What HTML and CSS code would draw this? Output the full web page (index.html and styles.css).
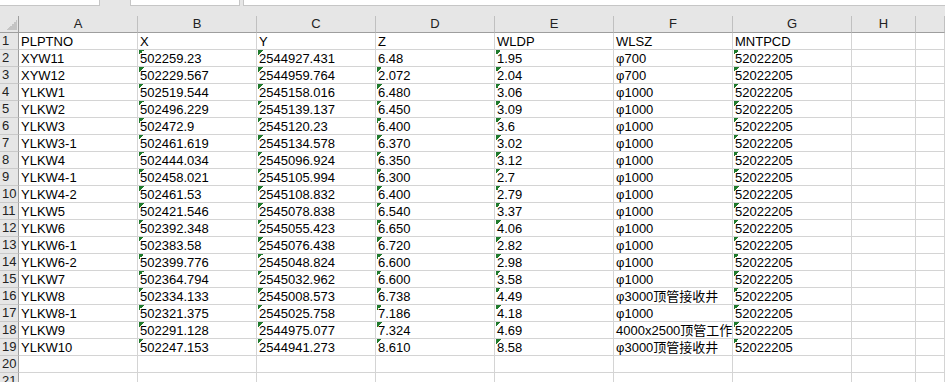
FILE: index.html
```html
<!DOCTYPE html>
<html lang="zh-CN">
<head>
    <meta charset="UTF-8">
    <title>PLPTNO - Sheet1</title>
    <link rel="stylesheet" href="styles.css">
</head>
<body>
    <div class="topbar">
        <div class="box box-name"></div>
        <div class="box box-mid"></div>
        <div class="box box-formula"></div>
    </div>

    <div class="sheet">
        <div class="row head">
            <div class="corner"></div>
            <div class="colhead">A</div>
            <div class="colhead">B</div>
            <div class="colhead">C</div>
            <div class="colhead">D</div>
            <div class="colhead">E</div>
            <div class="colhead">F</div>
            <div class="colhead">G</div>
            <div class="colhead">H</div>
            <div class="colhead"></div>
        </div>

        <div class="row">
            <div class="rownum">1</div>
            <div class="cell">PLPTNO</div><div class="cell">X</div><div class="cell">Y</div><div class="cell">Z</div>
            <div class="cell">WLDP</div><div class="cell">WLSZ</div><div class="cell">MNTPCD</div><div class="cell"></div><div class="cell"></div>
        </div>
        <div class="row">
            <div class="rownum">2</div>
            <div class="cell">XYW11</div><div class="cell flag">502259.23</div><div class="cell flag">2544927.431</div><div class="cell">6.48</div>
            <div class="cell flag">1.95</div><div class="cell">φ700</div><div class="cell flag">52022205</div><div class="cell"></div><div class="cell"></div>
        </div>
        <div class="row">
            <div class="rownum">3</div>
            <div class="cell">XYW12</div><div class="cell flag">502229.567</div><div class="cell flag">2544959.764</div><div class="cell flag">2.072</div>
            <div class="cell flag">2.04</div><div class="cell">φ700</div><div class="cell flag">52022205</div><div class="cell"></div><div class="cell"></div>
        </div>
        <div class="row">
            <div class="rownum">4</div>
            <div class="cell">YLKW1</div><div class="cell flag">502519.544</div><div class="cell flag">2545158.016</div><div class="cell flag">6.480</div>
            <div class="cell flag">3.06</div><div class="cell">φ1000</div><div class="cell flag">52022205</div><div class="cell"></div><div class="cell"></div>
        </div>
        <div class="row">
            <div class="rownum">5</div>
            <div class="cell">YLKW2</div><div class="cell flag">502496.229</div><div class="cell flag">2545139.137</div><div class="cell flag">6.450</div>
            <div class="cell flag">3.09</div><div class="cell">φ1000</div><div class="cell flag">52022205</div><div class="cell"></div><div class="cell"></div>
        </div>
        <div class="row">
            <div class="rownum">6</div>
            <div class="cell">YLKW3</div><div class="cell flag">502472.9</div><div class="cell flag">2545120.23</div><div class="cell flag">6.400</div>
            <div class="cell flag">3.6</div><div class="cell">φ1000</div><div class="cell flag">52022205</div><div class="cell"></div><div class="cell"></div>
        </div>
        <div class="row">
            <div class="rownum">7</div>
            <div class="cell">YLKW3-1</div><div class="cell flag">502461.619</div><div class="cell flag">2545134.578</div><div class="cell flag">6.370</div>
            <div class="cell flag">3.02</div><div class="cell">φ1000</div><div class="cell flag">52022205</div><div class="cell"></div><div class="cell"></div>
        </div>
        <div class="row">
            <div class="rownum">8</div>
            <div class="cell">YLKW4</div><div class="cell flag">502444.034</div><div class="cell flag">2545096.924</div><div class="cell flag">6.350</div>
            <div class="cell flag">3.12</div><div class="cell">φ1000</div><div class="cell flag">52022205</div><div class="cell"></div><div class="cell"></div>
        </div>
        <div class="row">
            <div class="rownum">9</div>
            <div class="cell">YLKW4-1</div><div class="cell flag">502458.021</div><div class="cell flag">2545105.994</div><div class="cell flag">6.300</div>
            <div class="cell flag">2.7</div><div class="cell">φ1000</div><div class="cell flag">52022205</div><div class="cell"></div><div class="cell"></div>
        </div>
        <div class="row">
            <div class="rownum">10</div>
            <div class="cell">YLKW4-2</div><div class="cell flag">502461.53</div><div class="cell flag">2545108.832</div><div class="cell flag">6.400</div>
            <div class="cell flag">2.79</div><div class="cell">φ1000</div><div class="cell flag">52022205</div><div class="cell"></div><div class="cell"></div>
        </div>
        <div class="row">
            <div class="rownum">11</div>
            <div class="cell">YLKW5</div><div class="cell flag">502421.546</div><div class="cell flag">2545078.838</div><div class="cell flag">6.540</div>
            <div class="cell flag">3.37</div><div class="cell">φ1000</div><div class="cell flag">52022205</div><div class="cell"></div><div class="cell"></div>
        </div>
        <div class="row">
            <div class="rownum">12</div>
            <div class="cell">YLKW6</div><div class="cell flag">502392.348</div><div class="cell flag">2545055.423</div><div class="cell flag">6.650</div>
            <div class="cell flag">4.06</div><div class="cell">φ1000</div><div class="cell flag">52022205</div><div class="cell"></div><div class="cell"></div>
        </div>
        <div class="row">
            <div class="rownum">13</div>
            <div class="cell">YLKW6-1</div><div class="cell flag">502383.58</div><div class="cell flag">2545076.438</div><div class="cell flag">6.720</div>
            <div class="cell flag">2.82</div><div class="cell">φ1000</div><div class="cell flag">52022205</div><div class="cell"></div><div class="cell"></div>
        </div>
        <div class="row">
            <div class="rownum">14</div>
            <div class="cell">YLKW6-2</div><div class="cell flag">502399.776</div><div class="cell flag">2545048.824</div><div class="cell flag">6.600</div>
            <div class="cell flag">2.98</div><div class="cell">φ1000</div><div class="cell flag">52022205</div><div class="cell"></div><div class="cell"></div>
        </div>
        <div class="row">
            <div class="rownum">15</div>
            <div class="cell">YLKW7</div><div class="cell flag">502364.794</div><div class="cell flag">2545032.962</div><div class="cell flag">6.600</div>
            <div class="cell flag">3.58</div><div class="cell">φ1000</div><div class="cell flag">52022205</div><div class="cell"></div><div class="cell"></div>
        </div>
        <div class="row">
            <div class="rownum">16</div>
            <div class="cell">YLKW8</div><div class="cell flag">502334.133</div><div class="cell flag">2545008.573</div><div class="cell flag">6.738</div>
            <div class="cell flag">4.49</div><div class="cell">φ3000顶管接收井</div><div class="cell flag">52022205</div><div class="cell"></div><div class="cell"></div>
        </div>
        <div class="row">
            <div class="rownum">17</div>
            <div class="cell">YLKW8-1</div><div class="cell flag">502321.375</div><div class="cell flag">2545025.758</div><div class="cell flag">7.186</div>
            <div class="cell flag">4.18</div><div class="cell">φ1000</div><div class="cell flag">52022205</div><div class="cell"></div><div class="cell"></div>
        </div>
        <div class="row">
            <div class="rownum">18</div>
            <div class="cell">YLKW9</div><div class="cell flag">502291.128</div><div class="cell flag">2544975.077</div><div class="cell flag">7.324</div>
            <div class="cell flag">4.69</div><div class="cell">4000x2500顶管工作井</div><div class="cell flag">52022205</div><div class="cell"></div><div class="cell"></div>
        </div>
        <div class="row">
            <div class="rownum">19</div>
            <div class="cell">YLKW10</div><div class="cell flag">502247.153</div><div class="cell flag">2544941.273</div><div class="cell flag">8.610</div>
            <div class="cell flag">8.58</div><div class="cell">φ3000顶管接收井</div><div class="cell flag">52022205</div><div class="cell"></div><div class="cell"></div>
        </div>
        <div class="row">
            <div class="rownum">20</div>
            <div class="cell"></div><div class="cell"></div><div class="cell"></div><div class="cell"></div>
            <div class="cell"></div><div class="cell"></div><div class="cell"></div><div class="cell"></div><div class="cell"></div>
        </div>
        <div class="row">
            <div class="rownum">21</div>
            <div class="cell"></div><div class="cell"></div><div class="cell"></div><div class="cell"></div>
            <div class="cell"></div><div class="cell"></div><div class="cell"></div><div class="cell"></div><div class="cell"></div>
        </div>
    </div>
</body>
</html>
```

FILE: styles.css
```css
html, body {
    margin: 0;
    padding: 0;
    height: 100%;
    overflow: hidden;
    background: #ffffff;
}
body {
    font-family: 'Liberation Sans', Arial, 'Noto Sans CJK SC', sans-serif;
    font-size: 13px;
    color: #000000;
}
.topbar {
    display: flex;
    height: 16px;
    background: #e6e6e6;
}
.box {
    height: 5px;
    background: #ffffff;
    border-bottom: 1px solid #c6c6c6;
}
.box-name {
    width: 99px;
    border-right: 1px solid #c6c6c6;
}
.box-mid {
    width: 108px;
    margin-left: 30px;
    border-left: 1px solid #c6c6c6;
    border-right: 1px solid #c6c6c6;
}
.box-formula {
    flex: 1;
    margin-left: 3px;
    border-left: 1px solid #c6c6c6;
}
.sheet {
    width: 945px;
}
.row {
    display: grid;
    grid-template-columns: 19px repeat(7, 119px) 64px 1fr;
    height: 17px;
}
.row > div {
    box-sizing: border-box;
    height: 17px;
    line-height: 17px;
    white-space: nowrap;
    overflow: hidden;
}
.head > div {
    background: #e6e6e6;
    border-right: 1px solid #c0c0c0;
    border-bottom: 1px solid #9e9e9e;
    line-height: 16px;
    color: #222222;
    text-align: center;
}
.head .corner {
    border-right: 1px solid #9e9e9e;
    background: #e6e6e6 linear-gradient(to top left, #c4c4c4 50%, transparent 50%) no-repeat;
    background-size: 10px 10px;
    background-position: right 1px bottom 2px;
}
.rownum {
    background: #e6e6e6;
    border-right: 1px solid #9e9e9e;
    border-bottom: 1px solid #cacaca;
    padding-left: 2px;
    color: #222222;
    line-height: 16px !important;
}
.cell {
    border-right: 1px solid #d4d4d4;
    border-bottom: 1px solid #d4d4d4;
    padding-left: 2px;
}
.flag {
    background: linear-gradient(135deg, #1f7a2c 50%, transparent 50%) no-repeat;
    background-size: 5px 5px;
    background-position: 1px 0;
}
```
